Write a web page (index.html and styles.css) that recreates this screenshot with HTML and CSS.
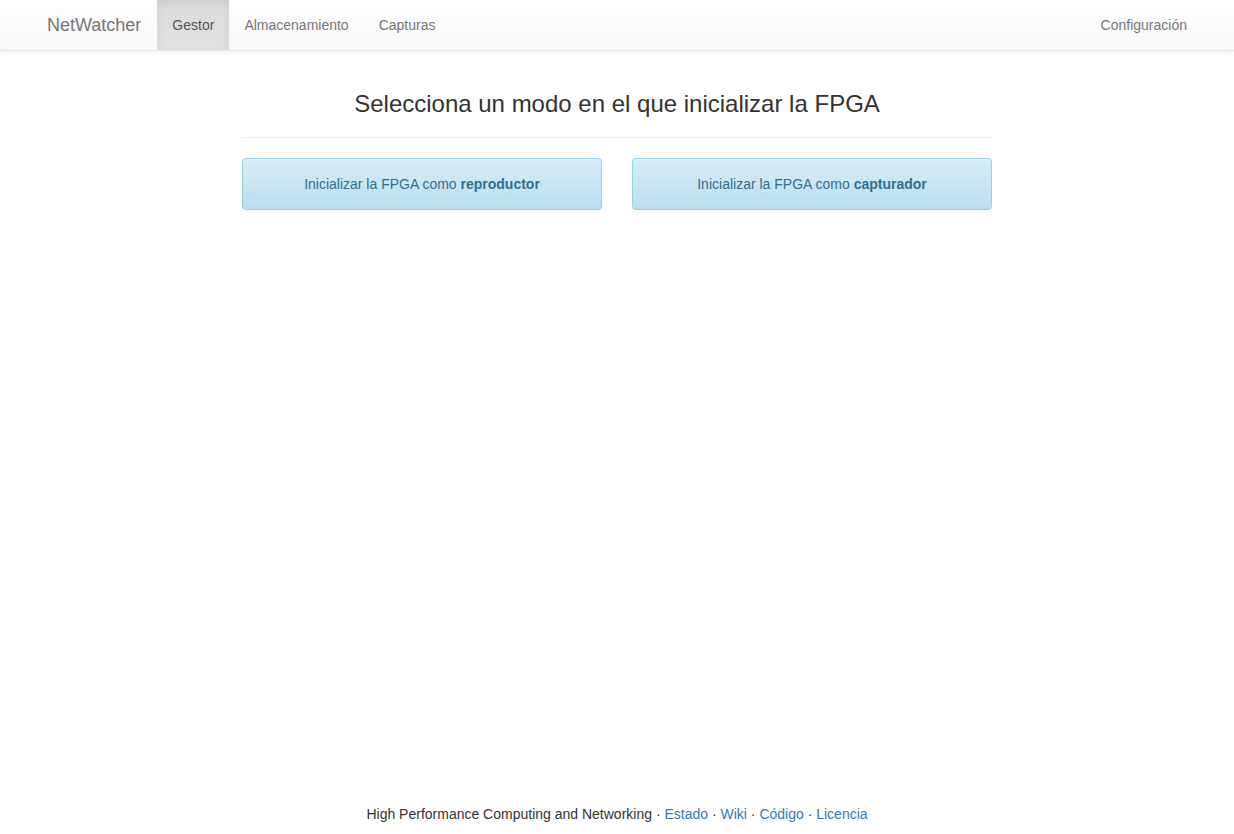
FILE: index.html
```html
<!DOCTYPE html>
<html lang="es">
<head>
<meta charset="utf-8">
<title>NetWatcher</title>
<link rel="stylesheet" href="styles.css">
</head>
<body>
<nav class="navbar">
  <div class="nav-inner">
    <a class="brand" href="#">NetWatcher</a>
    <ul class="nav">
      <li class="active"><a href="#">Gestor</a></li>
      <li><a href="#">Almacenamiento</a></li>
      <li><a href="#">Capturas</a></li>
    </ul>
    <ul class="nav nav-right">
      <li><a href="#">Configuración</a></li>
    </ul>
  </div>
</nav>
<main class="main">
  <div class="content">
    <div class="page-header">
      <h3>Selecciona un modo en el que inicializar la FPGA</h3>
    </div>
    <div class="options">
      <div class="option">Inicializar la FPGA como <b>reproductor</b></div>
      <div class="option">Inicializar la FPGA como <b>capturador</b></div>
    </div>
  </div>
</main>
<footer class="footer">
  High Performance Computing and Networking · <a href="#">Estado</a> · <a href="#">Wiki</a> · <a href="#">Código</a> · <a href="#">Licencia</a>
</footer>
</body>
</html>
```

FILE: styles.css
```css
* { box-sizing: border-box; }
html, body { margin: 0; padding: 0; }
body {
  font-family: "Liberation Sans", Arial, sans-serif;
  font-size: 14px;
  line-height: 20px;
  color: #333;
  background: #fff;
  min-height: 100vh;
  display: flex;
  flex-direction: column;
}
a { text-decoration: none; }

.navbar {
  height: 51px;
  background: linear-gradient(to bottom, #ffffff 0%, #f8f8f8 100%);
  border-bottom: 1px solid #e7e7e7;
  box-shadow: inset 0 1px 0 rgba(255,255,255,.15), 0 1px 5px rgba(0,0,0,.075);
  position: relative;
  z-index: 2;
}
.nav-inner {
  width: 1170px;
  margin: 0 auto;
  display: flex;
  height: 50px;
}
.brand {
  padding: 15px 16px 15px 15px;
  font-size: 18px;
  line-height: 20px;
  color: #777;
}
.nav {
  list-style: none;
  margin: 0;
  padding: 0;
  display: flex;
}
.nav-right { margin-left: auto; }
.nav li a {
  display: block;
  padding: 15px;
  line-height: 20px;
  color: #777;
}
.nav li.active a {
  color: #555;
  background: linear-gradient(to bottom, #dbdbdb 0%, #e2e2e2 100%);
  box-shadow: inset 0 3px 9px rgba(0,0,0,.075);
}

.main { flex: 1; }
.content {
  width: 750px;
  margin: 0 auto;
}
.page-header {
  margin-top: 40px;
  padding-bottom: 20px;
  border-bottom: 1px solid #eee;
  margin-bottom: 20px;
}
.page-header h3 {
  margin: 0;
  font-size: 24px;
  line-height: 26px;
  font-weight: 500;
  text-align: center;
  color: #333;
}
.options {
  display: flex;
  gap: 30px;
}
.option {
  flex: 1;
  padding: 15px;
  text-align: center;
  color: #31708f;
  background: linear-gradient(to bottom, #d9edf7 0%, #b9def0 100%);
  border: 1px solid #9acfea;
  border-radius: 4px;
  box-shadow: inset 0 1px 0 rgba(255,255,255,.25), 0 1px 2px rgba(0,0,0,.05);
}
.option b { font-weight: 700; }

.footer {
  text-align: center;
  padding-bottom: 10px;
  color: #333;
}
.footer a { color: #337ab7; }
```
